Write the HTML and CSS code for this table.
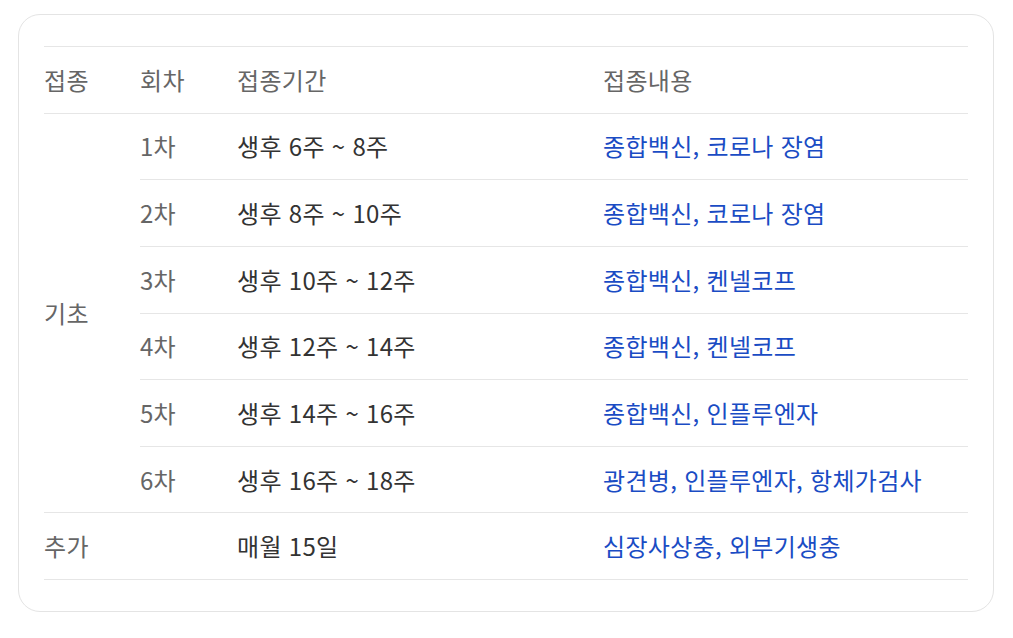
FILE: index.html
```html
<!DOCTYPE html>
<html lang="ko">
<head>
<meta charset="utf-8">
<link rel="stylesheet" href="styles.css">
</head>
<body>
<div class="card">
  <table class="schedule">
    <colgroup>
      <col class="c-type">
      <col class="c-round">
      <col class="c-period">
      <col class="c-content">
    </colgroup>
    <thead>
      <tr>
        <th>접종</th>
        <th>회차</th>
        <th>접종기간</th>
        <th>접종내용</th>
      </tr>
    </thead>
    <tbody>
      <tr>
        <td class="type" rowspan="6">기초</td>
        <td class="round">1차</td>
        <td class="period">생후 6주 ~ 8주</td>
        <td class="content">종합백신, 코로나 장염</td>
      </tr>
      <tr>
        <td class="round">2차</td>
        <td class="period">생후 8주 ~ 10주</td>
        <td class="content">종합백신, 코로나 장염</td>
      </tr>
      <tr>
        <td class="round">3차</td>
        <td class="period">생후 10주 ~ 12주</td>
        <td class="content">종합백신, 켄넬코프</td>
      </tr>
      <tr>
        <td class="round">4차</td>
        <td class="period">생후 12주 ~ 14주</td>
        <td class="content">종합백신, 켄넬코프</td>
      </tr>
      <tr>
        <td class="round">5차</td>
        <td class="period">생후 14주 ~ 16주</td>
        <td class="content">종합백신, 인플루엔자</td>
      </tr>
      <tr>
        <td class="round">6차</td>
        <td class="period">생후 16주 ~ 18주</td>
        <td class="content">광견병, 인플루엔자, 항체가검사</td>
      </tr>
      <tr>
        <td class="type">추가</td>
        <td class="round"></td>
        <td class="period">매월 15일</td>
        <td class="content">심장사상충, 외부기생충</td>
      </tr>
    </tbody>
  </table>
</div>
</body>
</html>
```

FILE: styles.css
```css
html, body {
  margin: 0;
  padding: 0;
  background: #ffffff;
}

body {
  font-family: "Noto Sans CJK KR", "Noto Sans", sans-serif;
  padding: 14px 20px 26px 18px;
}

.card {
  width: 976px;
  box-sizing: border-box;
  height: 598px;
  border: 1px solid #e4e4e4;
  border-radius: 22px;
  padding: 31px 25px;
}

.schedule {
  width: 100%;
  border-collapse: collapse;
  table-layout: fixed;
  border-top: 1px solid #e6e6e6;
}

.c-type { width: 96px; }
.c-round { width: 97px; }
.c-period { width: 366px; }

.schedule th,
.schedule td {
  height: 65.625px;
  padding: 0;
  text-align: left;
  vertical-align: middle;
  font-size: 24px;
  font-weight: 400;
  line-height: 1;
  letter-spacing: 0.3px;
  border-bottom: 1px solid #e6e6e6;
}

.schedule th {
  color: #666666;
}

.type,
.round {
  color: #666666;
}

.period {
  color: #333333;
}

.content {
  color: #1a4cc4;
}
```
